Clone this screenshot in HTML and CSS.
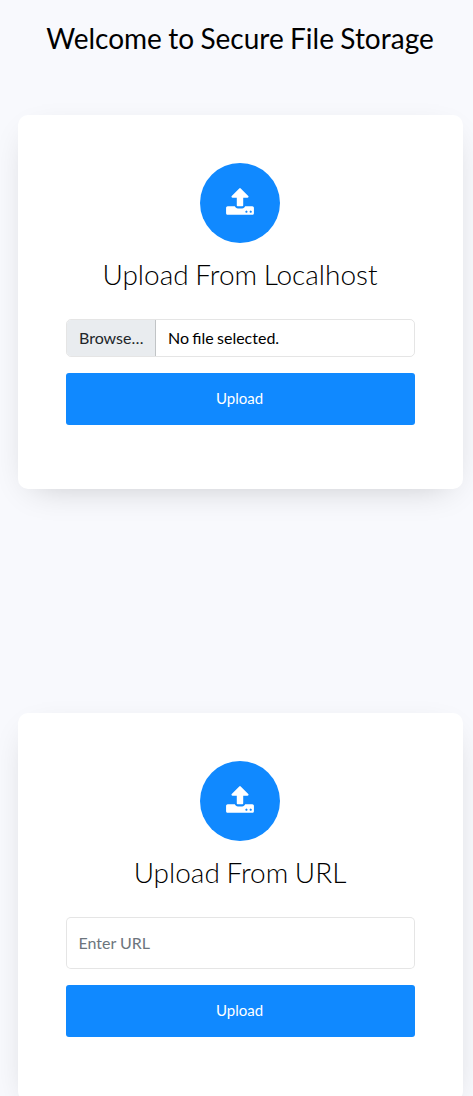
FILE: index.html
```html
<!DOCTYPE html>
<html lang="en">
<head>
<meta charset="utf-8">
<title>Secure File Storage</title>
<link rel="stylesheet" href="styles.css">
</head>
<body>
<svg class="symbols" width="0" height="0"><symbol id="upload" viewBox="0 0 1792 1792"><path fill="#fff" d="M1344 1472q0-26-19-45t-45-19-45 19-19 45 19 45 45 19 45-19 19-45zm256 0q0-26-19-45t-45-19-45 19-19 45 19 45 45 19 45-19 19-45zm128-224v320q0 40-28 68t-68 28h-1472q-40 0-68-28t-28-68v-320q0-40 28-68t68-28h427q21 56 70.500 92t110.500 36h256q61 0 110.500-36t70.500-92h427q40 0 68 28t28 68zm-325-648q-17 40-59 40h-256v448q0 26-19 45t-45 19h-256q-26 0-45-19t-19-45v-448h-256q-42 0-59-40-17-39 14-69l448-448q18-19 45-19t45 19l448 448q31 30 14 69z"/></symbol></svg>
<h1 class="title">Welcome to Secure File Storage</h1>
<main class="cards">
<section class="card">
<div class="icon"><svg width="30" height="30"><use href="#upload"/></svg></div>
<h2 class="heading">Upload From Localhost</h2>
<div class="file"><span class="browse">Browse…</span><span class="filename">No file selected.</span></div>
<button class="button">Upload</button>
</section>
<section class="card">
<div class="icon"><svg width="30" height="30"><use href="#upload"/></svg></div>
<h2 class="heading">Upload From URL</h2>
<input class="url" type="text" placeholder="Enter URL">
<button class="button">Upload</button>
</section>
</main>
</body>
</html>
```

FILE: styles.css
```css
* { box-sizing: border-box; }
html { overflow: hidden; }
body { margin: 0; height: 1096px; overflow: hidden; background: #f8f9fd; font: 400 16px/1.5 Lato, sans-serif; color: #000; display: flow-root; }
.symbols { display: none; }
.title { margin: 21px 0 0 7px; font-size: 28px; line-height: 34px; font-weight: 400; text-align: center; white-space: nowrap; word-spacing: -.8px; }
.cards { padding: 60px 10px 0 18px; display: flex; flex-direction: column; gap: 224px; }
.card { height: 374px; padding: 48px; background: #fff; border-radius: 10px; box-shadow: 0 10px 34px -15px rgba(0,0,0,.24); display: flex; flex-direction: column; align-items: stretch; }
.card + .card { height: 388px; }
.icon { width: 80px; height: 80px; margin-left: 134px; border-radius: 50%; background: #1089ff; display: flex; align-items: center; justify-content: center; padding-bottom: 2px; }
.icon svg { display: block; }
.heading { margin: 14px 1px 28px 0; font-size: 28px; line-height: 34px; font-weight: 300; text-align: center; white-space: nowrap; word-spacing: -1px; }
.file { height: 38px; display: flex; border: 1px solid rgba(0,0,0,.1); border-radius: 5px; overflow: hidden; line-height: 36px; }
.browse { width: 89px; padding-left: 12px; background: #e9ecef; color: #212529; border-right: 1px solid rgba(0,0,0,.17); white-space: nowrap; }
.filename { padding-left: 12px; word-spacing: -.8px; }
.button { height: 52px; flex-shrink: 0; margin: 16px 0 0; padding: 0 2px 2px 0; border: 0; border-radius: 3px; background: #1089ff; color: #fff; font: 400 15px/50px Lato, sans-serif; }
.url { height: 52px; flex-shrink: 0; width: 100%; padding: 0 12px 2px 11.500px; border: 1px solid rgba(0,0,0,.1); border-radius: 5px; font: 400 16px/24px Lato, sans-serif; color: #000; }
.url::placeholder { color: #6c757d; opacity: 1; }
```
